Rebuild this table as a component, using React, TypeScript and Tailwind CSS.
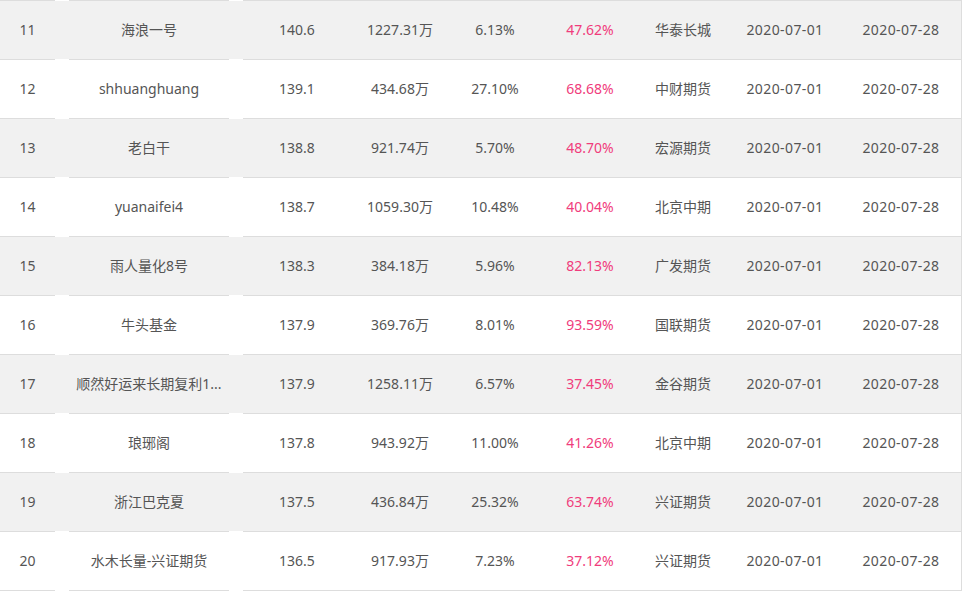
const rows = [
  { no: 11, name: "海浪一号", score: "140.6", amt: "1227.31万", dd: "6.13%", ret: "47.62%", broker: "华泰长城" },
  { no: 12, name: "shhuanghuang", score: "139.1", amt: "434.68万", dd: "27.10%", ret: "68.68%", broker: "中财期货" },
  { no: 13, name: "老白干", score: "138.8", amt: "921.74万", dd: "5.70%", ret: "48.70%", broker: "宏源期货" },
  { no: 14, name: "yuanaifei4", score: "138.7", amt: "1059.30万", dd: "10.48%", ret: "40.04%", broker: "北京中期" },
  { no: 15, name: "雨人量化8号", score: "138.3", amt: "384.18万", dd: "5.96%", ret: "82.13%", broker: "广发期货" },
  { no: 16, name: "牛头基金", score: "137.9", amt: "369.76万", dd: "8.01%", ret: "93.59%", broker: "国联期货" },
  { no: 17, name: "顺然好运来长期复利1...", score: "137.9", amt: "1258.11万", dd: "6.57%", ret: "37.45%", broker: "金谷期货" },
  { no: 18, name: "琅琊阁", score: "137.8", amt: "943.92万", dd: "11.00%", ret: "41.26%", broker: "北京中期" },
  { no: 19, name: "浙江巴克夏", score: "137.5", amt: "436.84万", dd: "25.32%", ret: "63.74%", broker: "兴证期货" },
  { no: 20, name: "水木长量-兴证期货", score: "136.5", amt: "917.93万", dd: "7.23%", ret: "37.12%", broker: "兴证期货" },
];

function Rule() {
  // border line with white gaps between the first columns
  return (
    <div className="flex h-px">
      <div className="w-[55px] bg-[#dddddd]" />
      <div className="w-[14px] bg-white" />
      <div className="w-[160px] bg-[#dddddd]" />
      <div className="w-[14px] bg-white" />
      <div className="flex-1 bg-[#dddddd]" />
    </div>
  );
}

export default function App() {
  return (
    <div
      className="w-[962px] h-[591px] bg-white overflow-hidden text-[14px] text-[#555555]"
      style={{ fontFamily: '"Microsoft YaHei", "Noto Sans", "Noto Sans CJK SC", sans-serif' }}
    >
      <div className="w-[962px] border-r border-[#dddddd]">
        {rows.map((r, i) => (
          <div key={r.no}>
            <Rule />
            <div className={`flex h-[58px] items-center pb-[2px] ${i % 2 === 0 ? "bg-[#f1f1f1]" : "bg-white"}`}>
              <div className="w-[55px] text-center">{r.no}</div>
              <div className="w-[14px]" />
              <div className="w-[160px] text-center whitespace-nowrap">{r.name}</div>
              <div className="w-[14px]" />
              <div className="w-[108px] text-center">{r.score}</div>
              <div className="w-[98px] text-center">{r.amt}</div>
              <div className="w-[92px] text-center">{r.dd}</div>
              <div className="w-[98px] text-center text-[#f03c7c]">{r.ret}</div>
              <div className="w-[88px] text-center">{r.broker}</div>
              <div className="w-[116px] text-center tracking-[0.4px]">2020-07-01</div>
              <div className="w-[116px] text-center tracking-[0.4px]">2020-07-28</div>
            </div>
          </div>
        ))}
        <Rule />
      </div>
    </div>
  );
}
